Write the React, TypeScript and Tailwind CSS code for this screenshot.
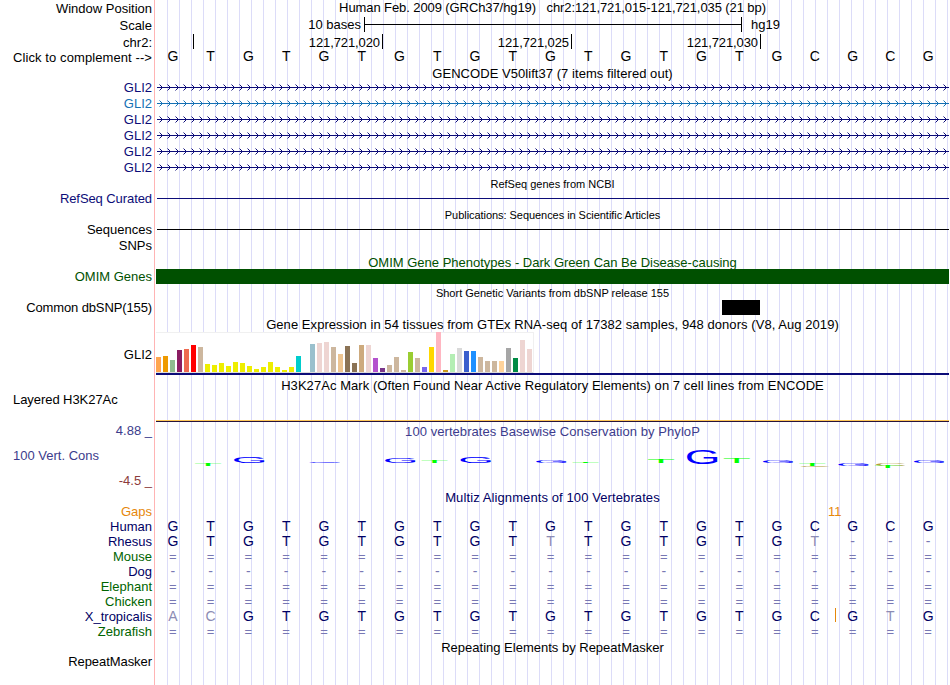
const BASES = "GTGTGTGTGTGTGTGTGCGCG";
const CELL = 793 / 21;

type Label = { text: string; className: string };

const labels: Label[] = [
  { text: "Window Position", className: "mt-px" },
  { text: "Scale", className: "mt-[2px]" },
  { text: "chr2:", className: "mt-[2px]" },
  { text: "Click to complement -->", className: "tracking-[0.09px]" },
  { text: "GLI2", className: "mt-[15px] text-[#0c0c78]" },
  { text: "GLI2", className: "mt-px text-[#1470b4]" },
  { text: "GLI2", className: "mt-px text-[#0c0c78]" },
  { text: "GLI2", className: "mt-px text-[#0c0c78]" },
  { text: "GLI2", className: "mt-px text-[#0c0c78]" },
  { text: "GLI2", className: "mt-px text-[#0c0c78]" },
  { text: "RefSeq Curated", className: "mt-4 text-[#0c0c78] tracking-[-0.08px]" },
  { text: "Sequences", className: "mt-4" },
  { text: "SNPs", className: "mt-px" },
  { text: "OMIM Genes", className: "mt-4 text-[#005000]" },
  { text: "Common dbSNP(155)", className: "mt-4 tracking-[-0.12px]" },
  { text: "GLI2", className: "mt-8" },
  { text: "Layered H3K27Ac", className: "mt-[30px] self-start pl-[13px] tracking-[-0.06px]" },
  { text: "4.88 _", className: "mt-4 text-[#3c3c8c]" },
  { text: "100 Vert. Cons", className: "mt-[10px] self-start pl-[13px] text-[#3c3c8c]" },
  { text: "-4.5 _", className: "mt-[10px] text-[#8c3c3c]" },
  { text: "Gaps", className: "mt-4 text-[#e6870a]" },
  { text: "Human", className: "text-[#000064]" },
  { text: "Rhesus", className: "text-[#000064]" },
  { text: "Mouse", className: "text-[#006400]" },
  { text: "Dog", className: "text-[#000064]" },
  { text: "Elephant", className: "text-[#006400]" },
  { text: "Chicken", className: "text-[#006400]" },
  { text: "X_tropicalis", className: "text-[#000064]" },
  { text: "Zebrafish", className: "text-[#006400]" },
  { text: "RepeatMasker", className: "mt-[15px] tracking-[-0.06px]" },
];

// [color, height] per tissue
const tissues: [string, number][] = [
  ["#ffa54f", 15], ["#ee9a00", 16], ["#8fbc8f", 12], ["#8b1c62", 22], ["#ee6a50", 23], ["#ff0000", 27],
  ["#cdb79e", 25], ["#eeee00", 8], ["#eeee00", 7], ["#eeee00", 9], ["#eeee00", 6], ["#eeee00", 10],
  ["#eeee00", 9], ["#eeee00", 6], ["#eeee00", 3], ["#eeee00", 5], ["#eeee00", 10], ["#eeee00", 5],
  ["#eeee00", 2], ["#eeee00", 5], ["#00cdcd", 16], ["#ee82ee", 0], ["#9ac0cd", 28], ["#eed5d2", 29],
  ["#eed5d2", 30], ["#cdb79e", 25], ["#eec591", 18], ["#8b7355", 26], ["#8b7355", 9], ["#cdaa7d", 27],
  ["#eed5d2", 27], ["#b452cd", 14], ["#7a378b", 4], ["#cdb79e", 7], ["#cdb79e", 15], ["#cdb79e", 2],
  ["#9acd32", 20], ["#cdb79e", 14], ["#7a67ee", 5], ["#ffd700", 25], ["#ffb6c1", 40], ["#cd9b1d", 2],
  ["#b4eeb4", 18], ["#d9d9d9", 24], ["#3a5fcd", 21], ["#1e90ff", 21], ["#cdb79e", 15], ["#cdb79e", 11],
  ["#cdb79e", 11], ["#ffd39b", 11], ["#a6a6a6", 24], ["#008b45", 14], ["#eed5d2", 32], ["#eed5d2", 23],
];

type Logo = { i: number; base: string; top: number; bottom: number };

// top and bottom are measured inside the 46px conservation plot
const logos: Logo[] = [
  { i: 1, base: "T", top: 25, bottom: 27 },
  { i: 2, base: "G", top: 17, bottom: 24 },
  { i: 4, base: "G", top: 23, bottom: 24 },
  { i: 6, base: "G", top: 19, bottom: 24 },
  { i: 7, base: "T", top: 21, bottom: 24 },
  { i: 8, base: "G", top: 18, bottom: 24 },
  { i: 10, base: "G", top: 21, bottom: 24 },
  { i: 11, base: "T", top: 23, bottom: 24 },
  { i: 13, base: "T", top: 20, bottom: 24 },
  { i: 14, base: "G", top: 11, bottom: 25 },
  { i: 15, base: "T", top: 19, bottom: 24 },
  { i: 16, base: "G", top: 21, bottom: 24 },
  { i: 17, base: "T", top: 25, bottom: 27 },
  { i: 17, base: "C", top: 27, bottom: 28 },
  { i: 18, base: "G", top: 25, bottom: 27 },
  { i: 19, base: "C", top: 25, bottom: 27 },
  { i: 19, base: "T", top: 27, bottom: 29 },
  { i: 20, base: "G", top: 21, bottom: 24 },
];

const logoColors: Record<string, string> = { G: "#0000ff", T: "#00ff00", C: "#b4a03c" };

const SAME = "=".repeat(21);

// lower case marks a base that differs from human
const alignment = [
  BASES,
  "GTGTGTGTGTtTGTGTGt---",
  SAME,
  "-".repeat(21),
  SAME,
  SAME,
  "acGTGTGTGTGTGTGTGCGtG",
  SAME,
];

function Title({ text, className }: { text: string; className: string }) {
  return <div className={`text-center whitespace-pre ${className}`}>{text}</div>;
}

function GeneTrack({ color }: { color: string }) {
  let d = "";
  for (let x = 6.5; x < 794; x += 8) {
    d += `M${x - 3} 4.5L${x} 7.5L${x - 3} 10.5`;
  }
  return (
    <svg width="793" height="16" className="block">
      <rect x="1" y="7" width="792" height="1" fill={color} />
      <path d={d} fill="none" stroke={color} strokeWidth="1" />
    </svg>
  );
}

function baseColor(c: string) {
  if (c === "=") return "pt-px text-[13px] leading-[14px] text-[#7878b4]";
  if (c === "-") return "text-[#7878b4]";
  if (c === c.toLowerCase()) return "text-[#8c8cb4]";
  return "";
}

function BaseRow({ seq, className }: { seq: string; className: string }) {
  return (
    <div className={`-ml-[2px] grid w-[793px] grid-cols-21 text-center text-[14px] leading-[14px] ${className}`}>
      {seq.split("").map((c, i) => (
        <span key={i} className={baseColor(c)}>{c.toUpperCase()}</span>
      ))}
    </div>
  );
}

function Ruler() {
  return (
    <div className="flex h-[15px] leading-[15px] tracking-[-0.1px]">
      <div className="w-[38px] border-r border-black" />
      {["121,721,020", "121,721,025", "121,721,030"].map((pos) => (
        <div key={pos} className="w-[189px] border-r border-black pr-[2px] pt-px text-right">{pos}</div>
      ))}
    </div>
  );
}

function ExpressionChart() {
  return (
    <div className="border-b-2 border-[#0c0c78]">
      <div className="flex h-[41px] w-[378px] items-end gap-[2px] bg-white pb-px shadow-[inset_0_1px_#f0f0f0,inset_-1px_0_#f0f0f0,inset_0_-1px_#dcdcdc]">
        {tissues.map(([color, height], i) => (
          <div key={i} className="w-[5px] shrink-0" style={{ backgroundColor: color, height }} />
        ))}
      </div>
    </div>
  );
}

function Conservation() {
  return (
    <svg width="793" height="46" className="block">
      {logos.map(({ i, base, top, bottom }, n) => {
        const cap = base === "T" ? 68.8 : 71;
        return (
          <text
            key={n}
            fontSize="100"
            fill={logoColors[base]}
            transform={`translate(${i * CELL + 0.2} ${bottom}) scale(0.46 ${(bottom - top) / cap})`}
          >
            {base}
          </text>
        );
      })}
    </svg>
  );
}

export default function App() {
  return (
    <div className="flex h-[685px] w-[949px] overflow-hidden bg-white font-['Liberation_Sans',Arial,sans-serif] text-[13px] leading-[15px] text-black">
      <div className="flex w-[155px] shrink-0 flex-col items-end border-r border-[#ffb4b4] pr-[2px]">
        {labels.map((label, i) => (
          <div key={i} className={`h-[15px] whitespace-nowrap ${label.className}`}>{label.text}</div>
        ))}
      </div>

      <div className="ml-px w-[793px] bg-[linear-gradient(90deg,#dcdcf8_1px,transparent_1px)] bg-[length:12px_100%] bg-[position:11px_0]">
        <Title className="h-[17px] tracking-[-0.09px]" text="Human Feb. 2009 (GRCh37/hg19)   chr2:121,721,015-121,721,035 (21 bp)" />
        <div className="flex h-[17px]">
          <span className="w-[205px] text-right">10 bases</span>
          <div className="ml-[3px] flex h-[15px] w-[378px] items-center border-x border-black">
            <div className="h-px w-full bg-black" />
          </div>
          <span className="ml-[9px]">hg19</span>
        </div>
        <Ruler />
        <BaseRow seq={BASES} className="h-[17px]" />

        <Title className="h-[14px] tracking-[0.05px]" text="GENCODE V50lift37 (7 items filtered out)" />
        <GeneTrack color="#0c0c78" />
        <GeneTrack color="#1470b4" />
        <GeneTrack color="#0c0c78" />
        <GeneTrack color="#0c0c78" />
        <GeneTrack color="#0c0c78" />
        <GeneTrack color="#0c0c78" />

        <Title className="mt-[2px] h-[13px] text-[11px] leading-[13px]" text="RefSeq genes from NCBI" />
        <div className="mt-[7px] ml-px h-px bg-[#0c0c78]" />

        <Title className="mt-[10px] h-[13px] text-[11px] leading-[13px] tracking-[-0.05px]" text="Publications: Sequences in Scientific Articles" />
        <div className="mt-[7px] ml-px h-px bg-black" />

        <Title className="mt-[25px] h-[14px] text-[#005000]" text="OMIM Gene Phenotypes - Dark Green Can Be Disease-causing" />
        <div className="h-[15px] bg-[#005000]" />

        <Title className="mt-[3px] h-[13px] text-[11px] leading-[13px]" text="Short Genetic Variants from dbSNP release 155" />
        <div className="ml-[566px] h-[15px] w-[38px] bg-black" />

        <Title className="mt-[2px] h-[15px] tracking-[0.06px]" text="Gene Expression in 54 tissues from GTEx RNA-seq of 17382 samples, 948 donors (V8, Aug 2019)" />
        <ExpressionChart />

        <Title className="mt-[3px] h-[15px] tracking-[0.06px]" text="H3K27Ac Mark (Often Found Near Active Regulatory Elements) on 7 cell lines from ENCODE" />
        <div className="mt-[27px] h-[2px] border-t border-[#ffc85a] bg-[#28143c]" />

        <Title className="mt-[2px] h-[15px] tracking-[0.06px] text-[#3c3c8c]" text="100 vertebrates Basewise Conservation by PhyloP" />
        <Conservation />

        <div className="mt-[5px] text-[#000064]">
          <Title className="h-[14px] tracking-[0.1px]" text="Multiz Alignments of 100 Vertebrates" />
          <div className="h-[15px] pl-[672px] text-[#e6870a]">11</div>
          {alignment.map((seq, i) =>
            i === 6 ? (
              <div key={i} className="relative">
                <BaseRow seq={seq} className="h-[15px]" />
                <div className="absolute top-[-1px] left-[679px] h-[14px] w-px bg-[#e6870a]" />
              </div>
            ) : (
              <BaseRow key={i} seq={seq} className="h-[15px]" />
            )
          )}
        </div>

        <Title className="mt-px h-[15px]" text="Repeating Elements by RepeatMasker" />
      </div>
    </div>
  );
}
